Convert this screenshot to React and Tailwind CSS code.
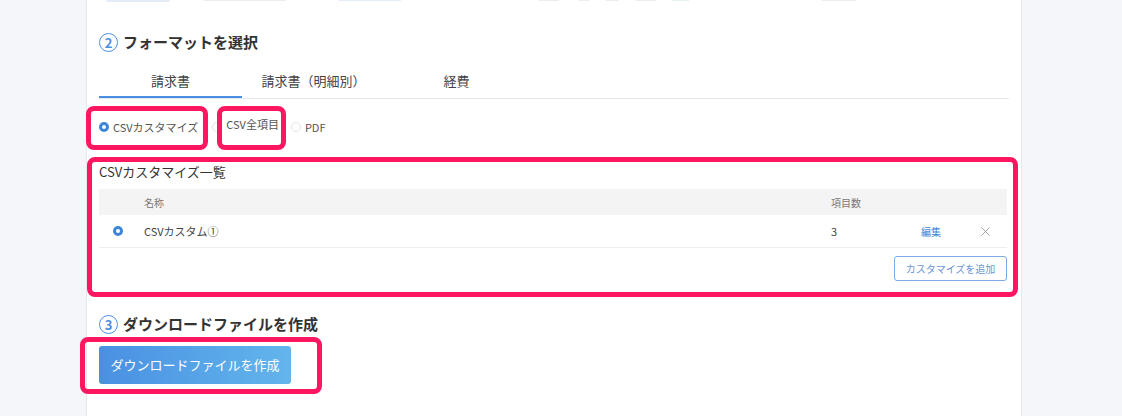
import { X } from 'lucide-react'

const font = { fontFamily: '"Noto Sans CJK JP", "Noto Sans", sans-serif' }

const StepNo = ({ n }) => (
  <span className="w-[19px] h-[19px] rounded-full border-[1.5px] border-[#4a90e2] text-[#4a90e2] text-[13px] font-bold leading-none grid place-items-center">
    {n}
  </span>
)

const Radio = ({ on, className = '' }) =>
  on ? (
    <span className={`block w-[10px] h-[10px] rounded-full border-[3px] border-[#3d85d8] bg-white shrink-0 ${className}`} />
  ) : (
    <span className={`block w-[10px] h-[10px] rounded-full border border-[#e1e4ea] bg-white shrink-0 ${className}`} />
  )

const tabs = ['請求書', '請求書（明細別）', '経費']

export default function App() {
  return (
    <div className="relative flex w-[1122px] h-[416px] overflow-hidden bg-[#f5f6fa] text-[#333]" style={font}>
      <div className="w-[87px] shrink-0 border-r border-[#e6e8ee]" />

      <main className="w-[935px] shrink-0 bg-white pl-[12px] pr-[12px] border-r border-[#e6e8ee]">
        {/* tail of the previous section, cut off at the top */}
        <div className="flex items-start h-[3px]">
          <div className="ml-[7px] w-[64px] h-[2px] rounded-b bg-[#e3ecf8]" />
          <div className="ml-[34px] w-[82px] h-[1px] bg-[#ececec]" />
          <div className="ml-[53px] w-[62px] h-[1px] bg-[#e3ecf8]" />
          <div className="ml-[138px] w-[20px] h-[1px] bg-[#ececec]" />
          <div className="ml-[20px] w-[10px] h-[1px] bg-[#ececec]" />
          <div className="ml-[17px] w-[13px] h-[1px] bg-[#ececec]" />
          <div className="ml-[17px] w-[20px] h-[1px] bg-[#ececec]" />
          <div className="ml-[16px] w-[17px] h-[1px] bg-[#e0f3f0]" />
          <div className="ml-[133px] w-[34px] h-[1px] bg-[#ececec]" />
        </div>

        <h2 className="mt-[29px] flex items-center gap-[5px] text-[15px] font-bold leading-[20px]">
          <StepNo n="2" />
          フォーマットを選択
        </h2>

        <div className="mt-[12px] flex w-[910px] border-b border-[#e3e8f0]">
          {tabs.map((t, i) => (
            <div
              key={t}
              className={`w-[143px] h-[34px] flex items-start justify-center pt-[7px] text-[13px] text-[#444] ${
                i === 0 ? 'border-b-2 border-[#4a90e2] -mb-px' : ''
              }`}
            >
              {t}
            </div>
          ))}
        </div>

        <div className="mt-[18px] flex items-center text-[11px] text-[#555] h-[20px]">
          <Radio on />
          <span className="ml-[4px]">CSVカスタマイズ</span>
          <Radio className="ml-[14px]" />
          <span className="ml-[4px] -mt-[5px]">CSV全項目</span>
          <Radio className="ml-[12px]" />
          <span className="ml-[4px]">PDF</span>
        </div>

        <p className="mt-[26px] text-[13px] leading-[18px] text-[#333]">CSVカスタマイズ一覧</p>

        <div className="mt-[8px] w-[908px]">
          <div className="flex items-center h-[26px] bg-[#f4f4f5] text-[10px] text-[#777]">
            <span className="ml-[45px] w-[687px]">名称</span>
            <span>項目数</span>
          </div>
          <div className="flex items-center h-[33px] border-b border-[#eceef2] text-[11px] text-[#444]">
            <Radio on className="ml-[14px]" />
            <span className="ml-[21px] w-[687px]">CSVカスタム①</span>
            <span className="w-[90px]">3</span>
            <span className="w-[57px] text-[10px] text-[#3d85d8]">編集</span>
            <X size={15} strokeWidth={1.2} className="text-[#888]" />
          </div>
          <div className="flex justify-end mt-[8px]">
            <button className="w-[113px] h-[25px] rounded-[3px] border border-[#7eabe4] text-[10px] text-[#6a95d6] bg-white">
              カスタマイズを追加
            </button>
          </div>
        </div>

        <h2 className="mt-[33px] flex items-center gap-[5px] text-[15px] font-bold leading-[20px]">
          <StepNo n="3" />
          ダウンロードファイルを作成
        </h2>

        <button className="mt-[12px] w-[192px] h-[38px] rounded-[3px] bg-gradient-to-r from-[#4a90e2] to-[#63b5ec] text-white text-[13px]">
          ダウンロードファイルを作成
        </button>
      </main>

      <div className="flex-1" />

      {/* highlight annotations */}
      <div className="absolute left-[86px] top-[106px] w-[122px] h-[44px] rounded-[8px] border-[5px] border-[#fd1660]" />
      <div className="absolute left-[217px] top-[106px] w-[69px] h-[44px] rounded-[8px] border-[5px] border-[#fd1660]" />
      <div className="absolute left-[87px] top-[157px] w-[931px] h-[140px] rounded-[8px] border-[5px] border-[#fd1660]" />
      <div className="absolute left-[80px] top-[337px] w-[242px] h-[57px] rounded-[8px] border-[5px] border-[#fd1660]" />
    </div>
  )
}
